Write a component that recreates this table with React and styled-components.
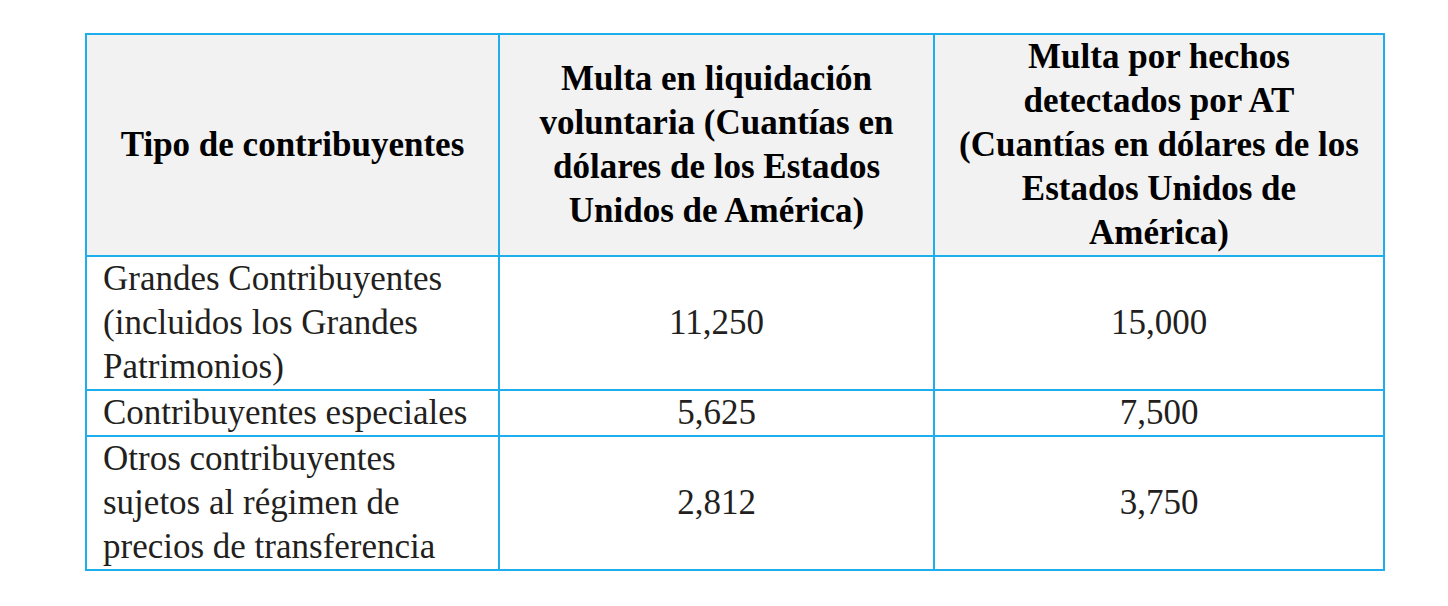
import React from 'react'
import styled, { createGlobalStyle } from 'styled-components'

const GlobalStyle = createGlobalStyle`
  body {
    margin: 0;
    background: #fff;
    font-family: "Liberation Serif", "Times New Roman", serif;
  }
`

const rows = [
  { tipo: 'Grandes Contribuyentes (incluidos los Grandes Patrimonios)', voluntaria: '11,250', detectados: '15,000' },
  { tipo: 'Contribuyentes especiales', voluntaria: '5,625', detectados: '7,500' },
  { tipo: 'Otros contribuyentes sujetos al régimen de precios de transferencia', voluntaria: '2,812', detectados: '3,750' },
]

const App = () => {
  return (
    <>
      <GlobalStyle />
      <Page>
        <Table>
          <colgroup>
            <col style={{ width: 413 }} />
            <col style={{ width: 435 }} />
            <col style={{ width: 450 }} />
          </colgroup>
          <thead>
            <tr>
              <HeadCell>Tipo de contribuyentes</HeadCell>
              <HeadCell>Multa en liquidación voluntaria (Cuantías en dólares de los Estados Unidos de América)</HeadCell>
              <HeadCell>Multa por hechos detectados por AT (Cuantías en dólares de los Estados Unidos de América)</HeadCell>
            </tr>
          </thead>
          <tbody>
            {rows.map((r) => (
              <tr key={r.tipo}>
                <Cell>{r.tipo}</Cell>
                <Cell $center>{r.voluntaria}</Cell>
                <Cell $center>{r.detectados}</Cell>
              </tr>
            ))}
          </tbody>
        </Table>
      </Page>
    </>
  )
}

export default App

const Page = styled.div`
  padding: 33px 0 0 85px;
`
const Table = styled.table`
  border-collapse: collapse;
  table-layout: fixed;
  width: 1298px;
  font-size: 35px;
  line-height: 44px;
`
const HeadCell = styled.th`
  border: 2px solid #1eaeee;
  background: #f2f2f2;
  color: #000;
  font-weight: bold;
  text-align: center;
  vertical-align: middle;
  padding: 0 16px;
`
const Cell = styled.td`
  border: 2px solid #1eaeee;
  color: #231f20;
  font-weight: normal;
  text-align: ${(p) => (p.$center ? 'center' : 'left')};
  vertical-align: middle;
  padding: 0 16px;
`
